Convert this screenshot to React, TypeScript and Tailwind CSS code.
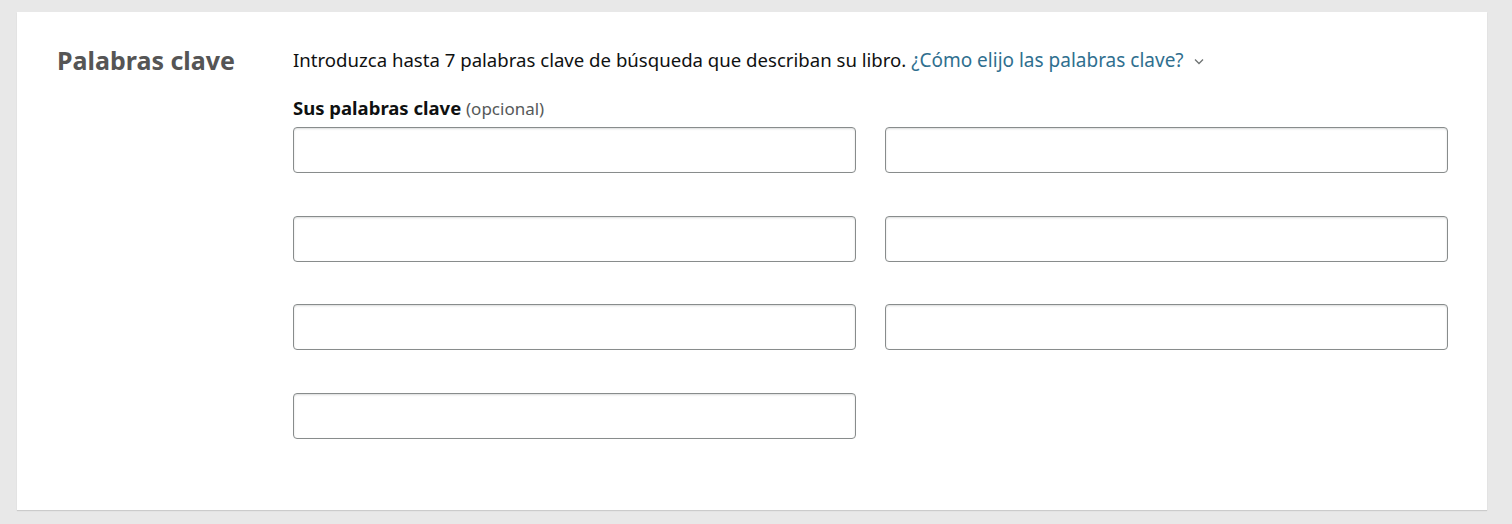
import React from "react";

const font = { fontFamily: '"Noto Sans", "Open Sans", Arial, sans-serif' };

function KeywordInput() {
  return (
    <input
      type="text"
      className="h-[46px] w-full rounded-[4px] border border-[#888c8c] bg-white px-3 text-[17px] text-[#0f1111] shadow-[inset_0_1px_2px_rgba(15,17,17,0.15)] outline-none"
    />
  );
}

export default function App() {
  const slots = [0, 1, 2, 3, 4, 5, 6];

  return (
    <div
      className="h-[524px] w-full bg-[#e8e8e8] pl-[17px] pr-[25px] pt-[12px]"
      style={font}
    >
      <div className="flex h-[498px] bg-white pl-[40px] pr-[39px] pt-[28px] shadow-[0_1px_1px_rgba(0,0,0,0.12)]">
        {/* section title */}
        <div className="w-[236px] shrink-0">
          <h2 className="text-[25px] font-bold leading-[40px] text-[#555555]">
            Palabras clave
          </h2>
        </div>

        <div className="flex-1">
          <p className="pt-[8px] text-[18.6px] leading-[24px] text-[#0f1111]">
            Introduzca hasta 7 palabras clave de búsqueda que describan su libro.{" "}
            <span className="inline-flex items-center text-[19px] text-[#2f6f8f]">
              ¿Cómo elijo las palabras clave?
              <svg
                className="ml-[10px] mt-[2px]"
                width="10"
                height="7"
                viewBox="0 0 10 7"
                fill="none"
              >
                <path
                  d="M1 1.5L5 5.5L9 1.5"
                  stroke="#6f7373"
                  strokeWidth="1.3"
                />
              </svg>
            </span>
          </p>

          <div className="mt-[24px] text-[18.5px] leading-[24px] text-[#0f1111]">
            <span className="font-bold">Sus palabras clave</span>{" "}
            <span className="text-[17px] text-[#565959]">(opcional)</span>
          </div>

          <div className="mt-[6px] grid grid-cols-2 gap-x-[29px] gap-y-[42.5px]">
            {slots.map((i) => (
              <KeywordInput key={i} />
            ))}
          </div>
        </div>
      </div>
    </div>
  );
}
